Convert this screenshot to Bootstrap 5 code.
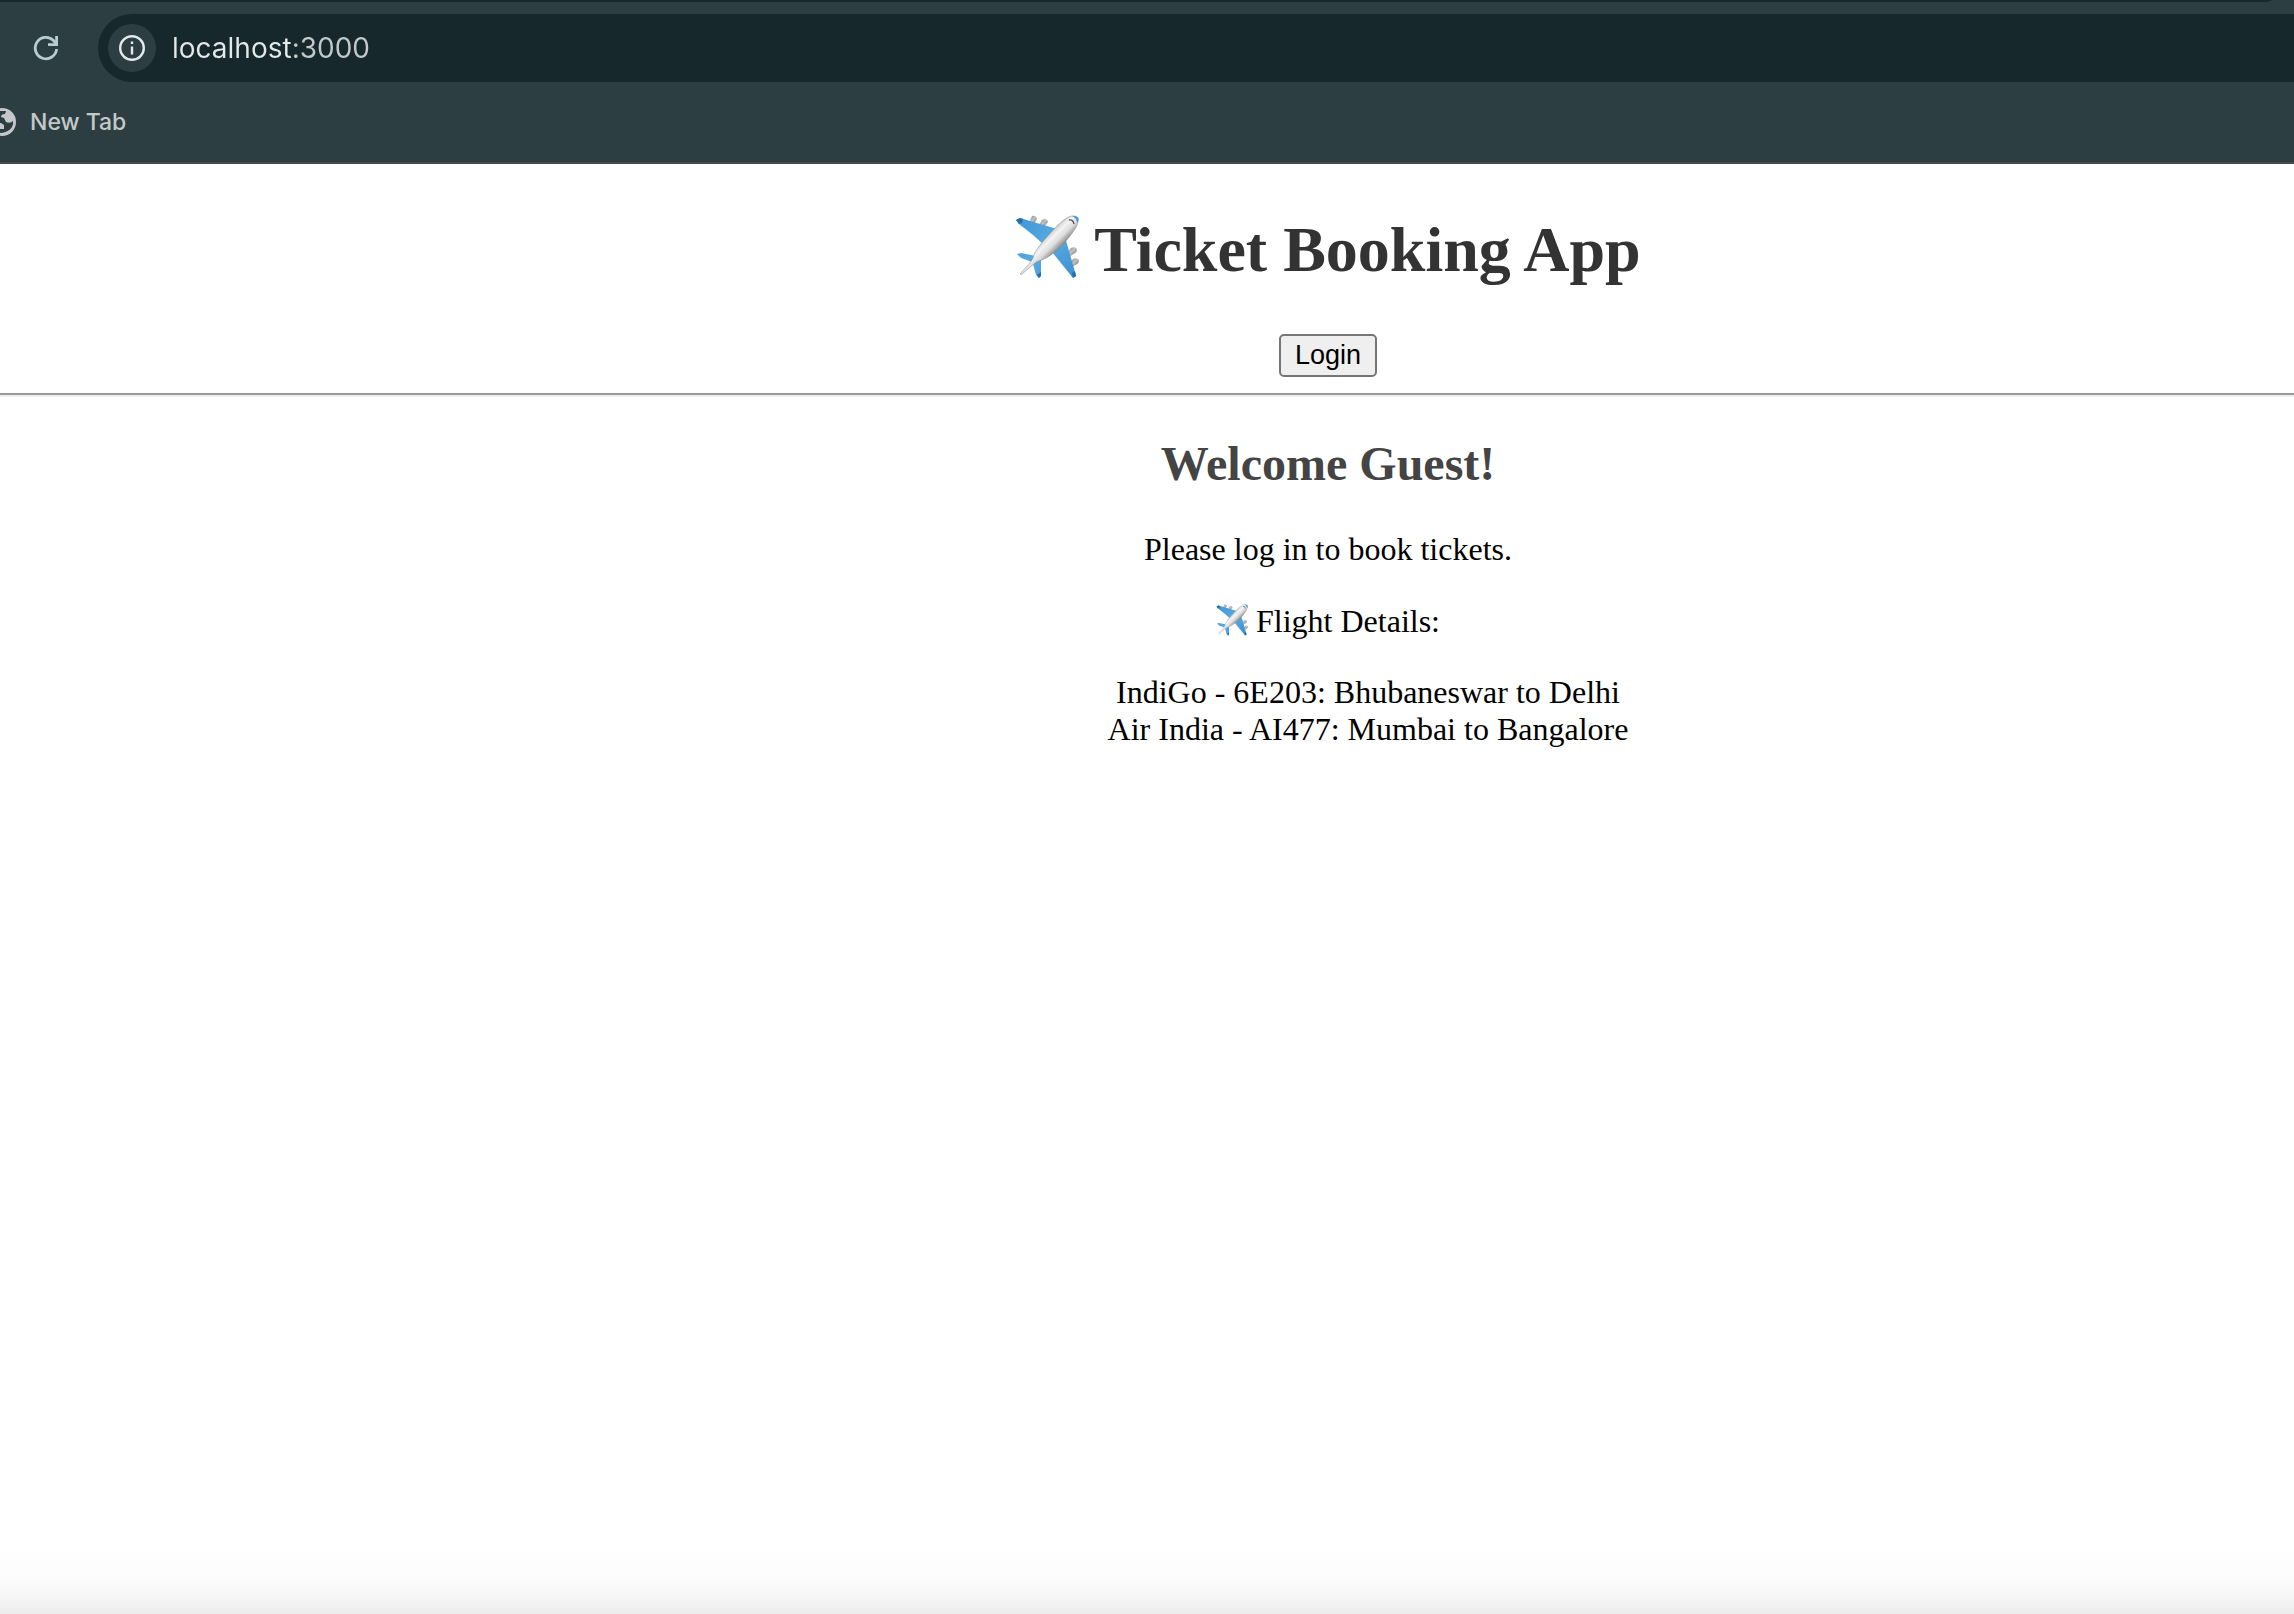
<!DOCTYPE html>
<html lang="en">
<head>
<meta charset="utf-8">
<meta name="viewport" content="width=device-width, initial-scale=1">
<title>Ticket Booking App</title>
<link href="https://cdn.jsdelivr.net/npm/bootstrap@5.3.0/dist/css/bootstrap.min.css" rel="stylesheet">
<style>
  body { font-family: "Liberation Serif", "Times New Roman", serif; font-size: 32px; line-height: 37px; color: #000; background: #fff; }
  .browser-bar { background: #2d3e42; border-bottom: 2px solid #47494a; font-family: Inter, Roboto, sans-serif; }
  .tab-edge { height: 2px; margin-right: 22px; background: #17282c; border-bottom-right-radius: 12px 2px; }
  .tool-row { padding: 12px 0 0 32px; }
  .icon-btn { width: 28px; height: 28px; }
  .address-pill { height: 68px; margin-left: 38px; padding-left: 10px; gap: 16px; background: #17282c; border-radius: 34px 0 0 34px; }
  .info-btn { width: 48px; height: 48px; background: #2d3e42; }
  .address-input { font-size: 28px; line-height: 36px; color: #e3e9e9; outline: 0;
    background: linear-gradient(90deg, #e3e9e9 122px, #c2c9c9 122px); -webkit-background-clip: text; background-clip: text; -webkit-text-fill-color: transparent; }
  .bookmark-row { height: 80px; }
  .bookmark-link { gap: 14px; margin-left: -12px; font-size: 23px; line-height: 32px; font-weight: 500; color: #c3c9ca; }
  .site-block { padding-left: 362px; }
  .app-title { margin: 44px 0 42px; font-size: 64px; line-height: 84px; font-weight: 700; color: #333; }
  .login-btn { padding: 4px 14px; border: 2px solid #767676; border-radius: 5px; background: #efefef; color: #000; font: 27px/31px "Liberation Sans", Arial, sans-serif; }
  .site-rule { margin: 16px 0 39px; border: 0; border-top: 2px solid #9a9a9a; border-bottom: 2px solid #eee; opacity: 1; }
  .welcome-title { margin: 0 0 40px; font-size: 48px; line-height: 55px; font-weight: 700; color: #444; }
  .body-line { margin: 0 0 32px; }
  .flight-line { line-height: 42px; }
  .flight-list { padding-left: 80px; }
  .plane { width: 1em; height: 1em; vertical-align: -0.12em; }
  .bottom-shade { height: 74px; background: linear-gradient(#fff, #fcfcfc 50%, #f6f6f6 78%, #ececec); }
</style>
<script src="https://cdn.jsdelivr.net/npm/bootstrap@5.3.0/dist/js/bootstrap.bundle.min.js"></script>
</head>
<body class="min-vh-100 d-flex flex-column overflow-x-hidden">
<svg width="0" height="0" class="position-absolute" aria-hidden="true">
  <defs>
    <linearGradient id="wing" x1="0" y1="0" x2="1" y2="1"><stop offset="0" stop-color="#3f97d6"/><stop offset=".5" stop-color="#58aae2"/><stop offset="1" stop-color="#3b8fce"/></linearGradient>
    <linearGradient id="hull" gradientUnits="userSpaceOnUse" x1="28" y1="22" x2="42" y2="36"><stop offset="0" stop-color="#bdbdbd"/><stop offset=".35" stop-color="#f4f4f4"/><stop offset=".65" stop-color="#dcdcdc"/><stop offset="1" stop-color="#868686"/></linearGradient>
    <linearGradient id="pod" x1="0" y1="0" x2="1" y2="1"><stop offset="0" stop-color="#6a6a6a"/><stop offset=".45" stop-color="#c4c4c4"/><stop offset="1" stop-color="#5c5c5c"/></linearGradient>
    <symbol id="plane" viewBox="0 0 64 64">
      <path fill="url(#pod)" d="M14 8 17 1Q21 0 22 4L18 10Z"/>
      <path fill="url(#pod)" d="M24 10 27 5Q32 2 33 7L28 13Z"/>
      <path fill="url(#pod)" d="M52 38 56 33Q60 31 62 34Q62 37 60 38L54 42Z"/>
      <path fill="url(#pod)" d="M55 49 58 44Q62 42 64 45Q64 48 62 49L57 52Z"/>
      <path fill="url(#wing)" d="M1 5 5 3 42 14 28 29 18 20 4 9ZM50 22 60 57 61 61 58 63 54 58 37 37ZM2 39 6 38 21 41 17 47 6 43ZM26 43 26 61 24 63 21 60 18 49Z"/>
      <path fill="#246fa8" d="M1 5 5 3 8 4 7 8 4 9ZM58 63 61 61 60 56 57 58ZM26 57 26 61 24 63 22 60Z"/>
      <path fill="url(#hull)" stroke="#858585" stroke-width=".5" d="M5 59C10 53 15 49 18 43C20 35 27 27 40 13C48 5 54 0 60 1C64 3 64 8 60 14C52 26 42 37 31 43C26 46 22 46 20 48L7 59Q5 60 5 59Z"/>
      <path fill="#409bd5" d="M59 1C64 1 65 5 62 8Q62 3 57 1Z"/>
      <path fill="none" stroke="#555" stroke-width="1.400" d="M54 5Q58 4 59 9"/>
    </symbol>
  </defs>
</svg>

<header class="browser-bar">
  <div class="tab-edge"></div>
  <div class="tool-row d-flex align-items-center">
    <button type="button" class="icon-btn btn p-0 border-0 d-flex" aria-label="Reload">
      <svg width="28" height="28" viewBox="0 0 28 28" fill="none" stroke="#b8cdd2" stroke-width="2.800"><path d="M24.600 15A10.700 10.700 0 1 1 21.500 6.500L24 9.500"/><path d="M24.600 2V10.600H16"/></svg>
    </button>
    <div class="address-pill d-flex align-items-center flex-grow-1">
      <button type="button" class="info-btn btn p-0 border-0 rounded-circle d-flex align-items-center justify-content-center flex-shrink-0" aria-label="View site information">
        <svg width="26" height="26" viewBox="0 0 26 26" fill="none"><circle cx="13" cy="13" r="11.800" stroke="#e3e9e9" stroke-width="2.400"/><path d="M13 11.500V19.500M13 6.500V9" stroke="#e3e9e9" stroke-width="2.400"/></svg>
      </button>
      <input class="address-input border-0 p-0 flex-grow-1" type="text" value="localhost:3000" aria-label="Address" spellcheck="false">
    </div>
  </div>
  <nav class="bookmark-row d-flex align-items-center" aria-label="Bookmarks">
    <a href="#" class="bookmark-link d-flex align-items-center text-decoration-none">
      <svg width="28" height="28" viewBox="0 0 28 28"><circle cx="14" cy="14" r="14" fill="#c5c7cd"/><path fill="#2d3e42" d="M12 3H18L17 6Q13 6 13 9L16 10 18 14Q22 16 25 13C26 19 21 25 12 25V21H16V17L13 15H3C3 10 6 5 12 3Z"/><path fill="#c5c7cd" d="M3 8 12 11V14H3Z"/></svg>
      <span>New Tab</span>
    </a>
  </nav>
</header>

<main class="text-center">
  <div class="site-block overflow-hidden">
    <h1 class="app-title"><svg class="plane" role="img" aria-label="Airplane"><use href="#plane"/></svg> Ticket Booking App</h1>
    <div class="d-flex justify-content-center"><button type="button" class="login-btn">Login</button></div>
  </div>
  <hr class="site-rule">
  <div class="site-block">
    <h2 class="welcome-title">Welcome Guest!</h2>
    <p class="body-line">Please log in to book tickets.</p>
    <p class="body-line flight-line"><svg class="plane" role="img" aria-label="Airplane"><use href="#plane"/></svg> Flight Details:</p>
    <ul class="list-unstyled flight-list">
      <li>IndiGo - 6E203: Bhubaneswar to Delhi</li>
      <li>Air India - AI477: Mumbai to Bangalore</li>
    </ul>
  </div>
</main>
<div class="bottom-shade mt-auto"></div>
</body>
</html>
